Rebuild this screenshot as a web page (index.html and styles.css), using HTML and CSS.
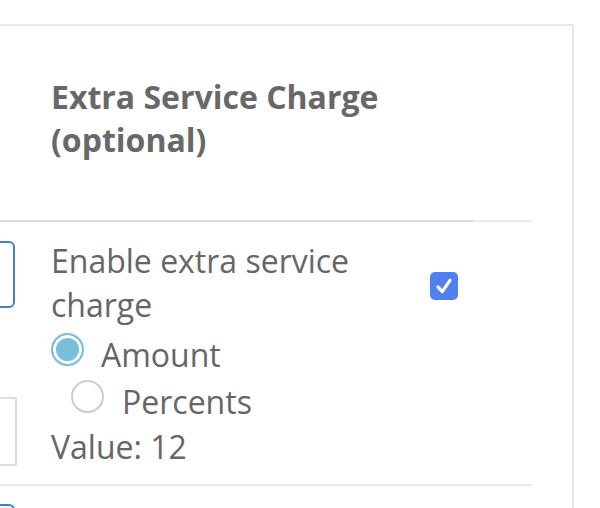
FILE: index.html
```html
<!DOCTYPE html>
<html lang="en">
<head>
<meta charset="utf-8">
<title>Extra Service Charge</title>
<link rel="stylesheet" href="styles.css">
</head>
<body>
<div class="card">
  <div class="row head-row">
    <div class="side"></div>
    <div class="main">
      <h2 class="title">Extra Service Charge (optional)</h2>
    </div>
  </div>
  <div class="rule rule-dual"></div>
  <div class="row opt-row">
    <div class="side">
      <div class="input input-blue"></div>
      <div class="input input-gray"></div>
    </div>
    <div class="main">
      <div class="opt-head">
        <div class="label">Enable extra service charge</div>
        <span class="checkbox">
          <svg viewBox="0 0 28 28" width="28" height="28"><path d="M8 15 L12.3 19.6 L20 8.4" fill="none" stroke="#fff" stroke-width="3.2" stroke-linecap="round" stroke-linejoin="round"/></svg>
        </span>
      </div>
      <div class="radio-line radio-amount">
        <span class="radio radio-on"></span>
        <span class="radio-text">Amount</span>
      </div>
      <div class="radio-line radio-percents">
        <span class="radio"></span>
        <span class="radio-text">Percents</span>
      </div>
      <div class="value">Value: 12</div>
    </div>
  </div>
  <div class="rule"></div>
  <div class="row next-row">
    <div class="side">
      <div class="input input-blue"></div>
    </div>
    <div class="main"></div>
  </div>
</div>
</body>
</html>
```

FILE: styles.css
```css
* { box-sizing: border-box; }

html, body {
  margin: 0;
  padding: 0;
  background: #ffffff;
  height: 508px;
  overflow: hidden;
}

body {
  font-family: "Open Sans", "Noto Sans", sans-serif;
  color: #666666;
}

.card {
  margin-top: 24px;
  margin-left: -200px;
  width: 774px;
  border-top: 2px solid #e3e8ec;
  border-right: 2px solid #e3e8ec;
  background: #ffffff;
  padding-right: 40px;
  height: 484px;
  overflow: hidden;
}

.row {
  display: grid;
  grid-template-columns: 217px 1fr;
  column-gap: 34px;
}

.head-row .main {
  padding-top: 49px;
  padding-bottom: 59px;
}

.title {
  margin: 0;
  font-size: 32px;
  line-height: 43px;
  font-weight: 700;
  color: #686868;
  width: 400px;
}

.rule {
  height: 2px;
  background: #e6eaee;
}

.rule-dual {
  background: linear-gradient(to right, #dddddd 0, #dddddd 674px, #e9ecf0 674px);
}

.opt-row .main {
  padding-top: 17px;
  padding-bottom: 15px;
}

.side {
  display: flex;
  flex-direction: column;
  align-items: flex-end;
}

.input {
  width: 120px;
  border-radius: 6px;
}

.input-blue {
  border: 2px solid #3f82c6;
  height: 67px;
  margin-right: 2px;
}

.opt-row .input-blue { margin-top: 19px; }

.input-gray {
  border: 2px solid #dedede;
  border-radius: 0;
  height: 69px;
  margin-top: 89px;
}

.next-row .input-blue { margin-top: 18px; }

.opt-head {
  display: flex;
  align-items: flex-start;
}

.label {
  width: 379px;
  font-size: 32px;
  line-height: 44px;
}

.checkbox {
  width: 28px;
  height: 28px;
  margin-top: 33px;
  border-radius: 5px;
  background: #4f80ef;
  display: block;
}

.checkbox svg { display: block; }

.radio-line {
  display: flex;
  align-items: flex-start;
  font-size: 32px;
  line-height: 44px;
}

.radio {
  width: 33px;
  height: 33px;
  border-radius: 50%;
  border: 2px solid #cccccc;
  background: #ffffff;
  flex: none;
  margin-right: 17px;
}

.radio-on {
  border: 2.5px solid #79bfdc;
  box-shadow: inset 0 0 0 3px #ffffff;
  background: #79bfdc;
}

.radio-amount { margin-top: 6px; }
.radio-amount .radio { margin-top: 0; }

.radio-percents {
  margin-top: 3px;
  padding-left: 20px;
}
.radio-percents .radio { margin-top: 0; margin-right: 18px; }

.value {
  margin-top: 1px;
  font-size: 32px;
  line-height: 44px;
}
```
